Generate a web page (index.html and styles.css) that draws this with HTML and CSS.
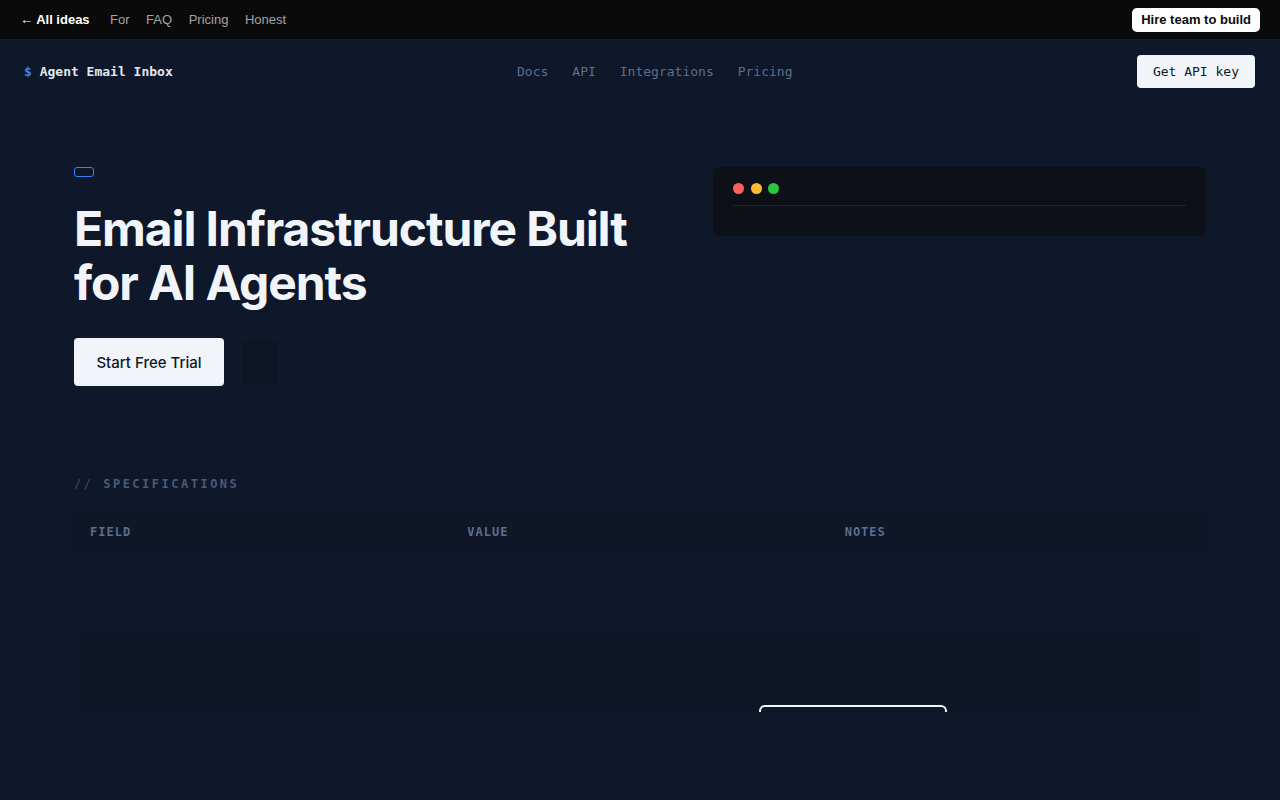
FILE: index.html
```html
<!DOCTYPE html>
<html lang="en">
<head>
<meta charset="utf-8">
<title>Agent Email Inbox</title>
<link rel="stylesheet" href="styles.css">
</head>
<body>
<div class="topbar">
  <div class="topbar-left">
    <a class="back" href="#">← All ideas</a>
    <a class="tlink" href="#">For</a>
    <a class="tlink" href="#">FAQ</a>
    <a class="tlink" href="#">Pricing</a>
    <a class="tlink" href="#">Honest</a>
  </div>
  <a class="hire" href="#">Hire team to build</a>
</div>

<header class="header">
  <div class="logo"><span class="dollar">$</span> Agent Email Inbox</div>
  <nav class="nav">
    <a href="#">Docs</a>
    <a href="#">API</a>
    <a href="#">Integrations</a>
    <a href="#">Pricing</a>
  </nav>
  <a class="apikey" href="#">Get API key</a>
</header>

<main class="clip">
  <section class="hero">
    <div class="hero-left">
      <span class="badge"></span>
      <h1>Email Infrastructure Built for AI Agents</h1>
      <div class="actions">
        <a class="primary" href="#">Start Free Trial</a>
        <a class="ghost" href="#"></a>
      </div>
    </div>
    <div class="terminal">
      <div class="dots">
        <span class="dot red"></span>
        <span class="dot yellow"></span>
        <span class="dot green"></span>
      </div>
      <div class="term-line"></div>
    </div>
  </section>

  <section class="specs">
    <div class="specs-label"><span class="slash">//</span> SPECIFICATIONS</div>
    <div class="table">
      <div class="thead">
        <div>FIELD</div>
        <div>VALUE</div>
        <div>NOTES</div>
      </div>
      <div class="tbody"></div>
    </div>
    <div class="panel">
      <span class="outline-btn"></span>
    </div>
  </section>
</main>
</body>
</html>
```

FILE: styles.css
```css
* { box-sizing: border-box; }
html, body { margin: 0; padding: 0; }
body {
  background: #0f172a;
  font-family: Inter, "Liberation Sans", sans-serif;
  color: #f1f5f9;
  height: 800px;
  overflow: hidden;
}
a { text-decoration: none; color: inherit; }

.topbar {
  height: 40px;
  background: #0a0a0a;
  border-bottom: 1px solid #1c1c1c;
  display: flex;
  align-items: center;
  justify-content: space-between;
  padding: 0 20px 0 20px;
  font-family: "Liberation Sans", Arial, sans-serif;
  font-size: 13px;
}
.topbar-left { display: flex; align-items: center; gap: 16.5px; }
.back { color: #ffffff; font-weight: 700; margin-right: 4px; }
.tlink { color: #a3a3a3; }
.hire {
  background: #ffffff;
  color: #0a0a0a;
  font-weight: 700;
  padding: 5px 9px;
  border-radius: 5px;
  line-height: 14px;
}

.header {
  height: 63px;
  display: flex;
  align-items: center;
  justify-content: space-between;
  padding: 0 24px;
  font-family: "DejaVu Sans Mono", "Liberation Mono", monospace;
  font-size: 13px;
  position: relative;
}
.logo { color: #e2e8f0; font-weight: 700; }
.dollar { color: #3b82f6; }
.nav {
  position: absolute;
  left: 517px;
  display: flex;
  gap: 24px;
}
.nav a { color: #5b6f8e; }
.apikey {
  background: #f1f5f9;
  color: #0f172a;
  padding: 8px 16px 8px 16px;
  border-radius: 4px;
  line-height: 17px;
  margin-right: 1px;
}

.clip {
  height: 609px;
  overflow: hidden;
  width: 1132px;
  margin: 0 auto;
}

.hero {
  display: grid;
  grid-template-columns: 1fr 493px;
  gap: 64px;
  padding-top: 64px;
}
.hero-left { display: flex; flex-direction: column; align-items: flex-start; }
.badge {
  width: 20px;
  height: 10px;
  border: 1px solid #3b82f6;
  border-radius: 3px;
}
.hero h1 {
  margin: 25px 0 0;
  font-size: 48px;
  line-height: 54px;
  font-weight: 700;
  letter-spacing: -1.1px;
  color: #f1f5f9;
}
.actions { display: flex; gap: 16px; margin-top: 28px; }
.primary {
  height: 48px;
  width: 150px;
  display: flex;
  align-items: center;
  justify-content: center;
  background: #f1f5f9;
  color: #0f172a;
  font-size: 15px;
  font-weight: 500;
  border-radius: 4px;
}
.ghost {
  width: 40px;
  height: 48px;
  border: 1px solid #131a2a;
  border-radius: 4px;
  background: #0e1526;
}

.terminal {
  background: #0d1117;
  border-radius: 6px;
  height: 69px;
  padding: 16px 20px 0;
}
.dots { display: flex; gap: 6.5px; }
.dot { width: 11px; height: 11px; border-radius: 50%; }
.red { background: #ff5f57; }
.yellow { background: #febc2e; }
.green { background: #28c840; }
.term-line { height: 1px; background: #21262d; margin-top: 11px; }

.specs { margin-top: 91px; }
.specs-label {
  font-family: "DejaVu Sans Mono", "Liberation Mono", monospace;
  font-size: 12px;
  line-height: 14px;
  font-weight: 700;
  letter-spacing: 2.5px;
  color: #4b5b75;
}
.slash { color: #3d4a60; font-weight: 400; }
.table { margin-top: 20px; }
.thead {
  display: grid;
  grid-template-columns: repeat(3, 1fr);
  height: 43px;
  padding-bottom: 1px;
  align-items: center;
  background: #0e1628;
  border-bottom: 1px solid #111a2c;
  font-family: "DejaVu Sans Mono", "Liberation Mono", monospace;
  font-size: 12px;
  font-weight: 700;
  letter-spacing: 1px;
  color: #5b6f8e;
}
.thead div { padding-left: 16px; }
.tbody { height: 79px; }
.panel {
  background: #0f1628;
  border: 1px solid #101828;
  border-radius: 6px;
  height: 200px;
  padding: 71px 0 0 684px;
}
.outline-btn {
  display: block;
  width: 188px;
  height: 48px;
  border: 2px solid #f1f5f9;
  border-radius: 6px;
}
```
